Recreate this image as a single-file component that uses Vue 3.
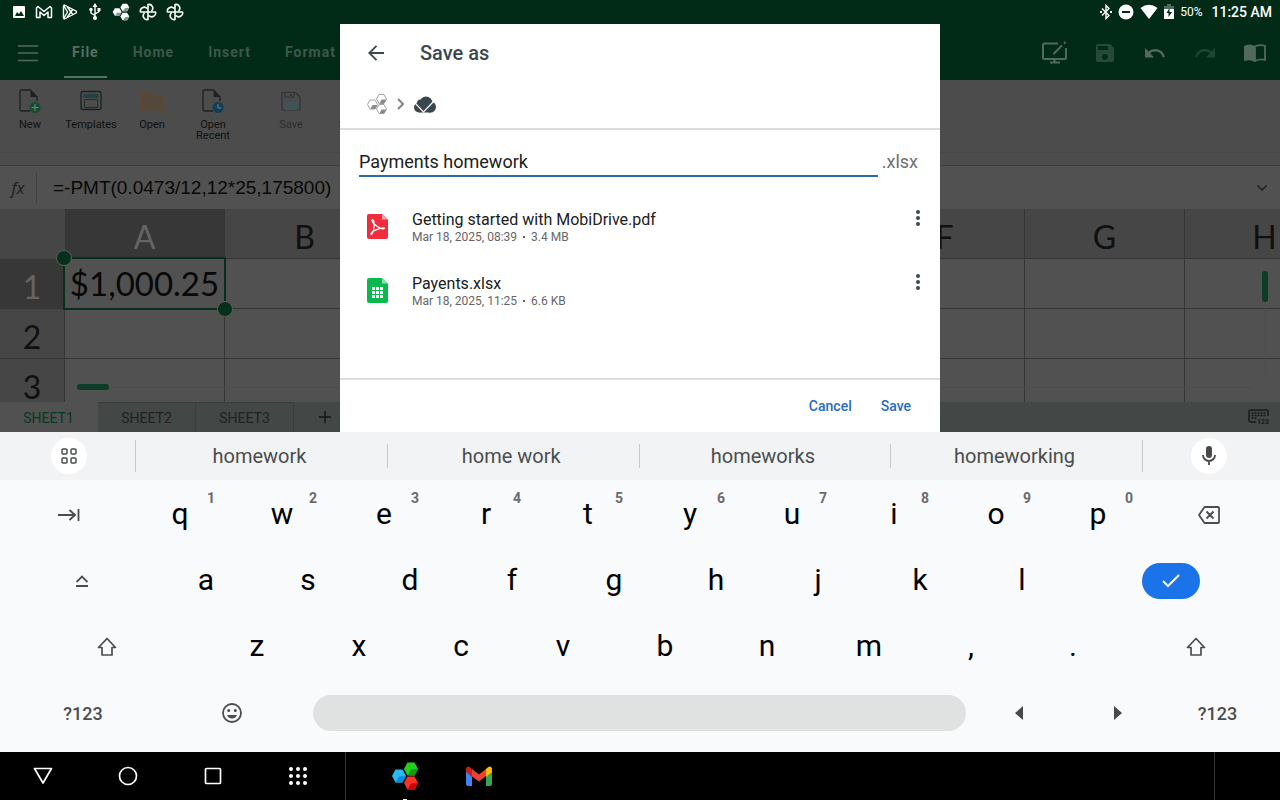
<script setup>
import { ref } from 'vue'

const fileName = ref('Payments homework')
const menus = ['File', 'Home', 'Insert', 'Format']
const columns = ['A', 'B', 'C', 'D', 'E', 'F', 'G', 'H']
const rows = [1, 2, 3]
const sheets = ['SHEET1', 'SHEET2', 'SHEET3']
const files = [
  { name: 'Getting started with MobiDrive.pdf', date: 'Mar 18, 2025, 08:39', size: '3.4 MB', type: 'pdf' },
  { name: 'Payents.xlsx', date: 'Mar 18, 2025, 11:25', size: '6.6 KB', type: 'xlsx' }
]
const suggestions = ['homework', 'home work', 'homeworks', 'homeworking']
const topRow = [...'qwertyuiop'].map((letter, i) => ({ letter, hint: (i + 1) % 10 }))
const homeRow = [...'asdfghjkl']
const bottomRow = [...'zxcvbnm,.']
</script>

<template>
  <div class="screen">
    <section class="app">
      <div class="status">
        <div class="status-left">
          <svg width="14" height="14" viewBox="0 0 14 14"><path fill="#fff" fill-rule="evenodd" d="M2 1h10a1 1 0 0 1 1 1v10a1 1 0 0 1-1 1H2a1 1 0 0 1-1-1V2a1 1 0 0 1 1-1zM3 11h9L9 6 7 9 5 7z" /></svg>
          <svg width="18" height="14" viewBox="0 0 18 14"><path fill="none" stroke="#fff" stroke-width="1.5" stroke-linejoin="round" d="M1.500 12.500V3L3 1.500 9 6.500 15 1.500 16.500 3v9.500H13V7L9 10.500 5 7v5.500z" /></svg>
          <svg width="16" height="16" viewBox="0 0 16 16"><path fill="none" stroke="#fff" stroke-width="1.400" stroke-linejoin="round" d="M2.500 1q-1 .3-1 1.500v11q0 1.200 1 1.500L14 9q1-1 0-2zM5 2.500L11 11M5 13.500L11 5M2 14l3.500-6L2 2" /></svg>
          <svg width="16" height="18" viewBox="0 0 16 18"><path fill="none" stroke="#fff" stroke-width="1.400" d="M8 3v12M8 12.500L4 10V7M8 11l4-2.500V6" /><path fill="#fff" d="M8 0l2.500 4h-5zM10.500 5h3v3h-3z" /><circle cx="4" cy="6.500" r="1.700" fill="#fff" /><circle cx="8" cy="15" r="2" fill="#fff" /></svg>
          <svg width="18" height="18" viewBox="0 0 26 28"><g fill="#fff"><path d="M0 14l3.500-6h7l3.500 6-3.500 6h-7zM12 7l3.500-6h7L26 7l-3.500 6h-7zM12 21l3.500-6h7l3.500 6-3.500 6h-7z" /></g><path fill="#82968b" d="M4 20l3-5h7l-3.500 5zM16 13l3-5 7-1-3.500 6zM16 27l3-5 7-1-3.500 6z" /></svg>
          <svg v-for="n in 2" :key="n" width="18" height="18" viewBox="0 0 18 18"><path fill="none" stroke="#fff" stroke-width="1.600" stroke-linejoin="round" d="M9 9V1.500a3.800 3.800 0 0 1 3.500 6.500 M9 1.500V9H1.500A3.800 3.800 0 0 1 8 5.500M9 9v7.500A3.800 3.800 0 0 1 5.500 10M9 9h7.500a3.800 3.800 0 0 1-6.500 3.500M9 9h7.500" /></svg>
        </div>
        <div class="status-right">
          <svg width="12" height="16" viewBox="0 0 12 16"><path fill="none" stroke="#fff" stroke-width="1.400" d="M2 4.500l7 7L6 14.500v-13l3 3-7 7" /><path fill="#fff" d="M0 7h2v2H0zM10 7h2v2h-2z" /></svg>
          <svg width="16" height="16" viewBox="0 0 16 16"><circle cx="8" cy="8" r="7.500" fill="#fff" /><path fill="#022b17" d="M4 7h8v2H4z" /></svg>
          <svg width="18" height="16" viewBox="0 0 18 16"><path fill="#fff" d="M9 15L.5 4Q9-2.500 17.500 4z" /></svg>
          <svg width="10" height="16" viewBox="0 0 10 16"><path fill="#4d6b5b" d="M3 0h4v2h3v6H0V2h3z" /><path fill="#fff" d="M0 5h10v10H0z" /><path fill="#022b17" d="M5.500 4v4H8l-3.500 5V9H2.500z" /></svg>
          <span class="battery">50%</span>
          <span class="clock">11:25 AM</span>
        </div>
      </div>

      <header class="menubar">
        <button class="menu-icon" aria-label="Menu"><svg width="20" height="18" viewBox="0 0 20 18"><path stroke="#53695d" stroke-width="1.500" d="M0 2h20M0 9h20M0 16.500h20" /></svg></button>
        <nav class="menus">
          <button v-for="(m, i) in menus" :key="m" :class="['menu', { active: i === 0 }]">{{ m }}</button>
        </nav>
        <div class="actions">
          <button aria-label="Edit mode"><svg width="26" height="24" viewBox="0 0 26 24" fill="none" stroke="#53695d" stroke-width="2"><path d="M16 2.500H2.500A1.500 1.500 0 0 0 1 4v12.500A1.500 1.500 0 0 0 2.500 18h20a1.500 1.500 0 0 0 1.500-1.500V7M12.500 18v4M8 21.500h10M11.500 13L20 4.500M22 2.500L23.500 1" /></svg></button>
          <button aria-label="Save document"><svg width="18" height="18" viewBox="0 0 18 18"><path fill="#274a37" fill-rule="evenodd" d="M2 0h12l4 4v12a2 2 0 0 1-2 2H2a2 2 0 0 1-2-2V2a2 2 0 0 1 2-2zM2 2v4h10V2zM9 10a3 3 0 1 0 0 6 3 3 0 0 0 0-6z" /></svg></button>
          <button aria-label="Undo"><svg width="20" height="10" viewBox="0 0 20 10"><path fill="#53695d" d="M0 0l3.600 3.600A10 10 0 0 1 20 8.700L17.800 9.400A7.800 7.800 0 0 0 5.200 5.200L9 9.500H0z" /></svg></button>
          <button aria-label="Redo"><svg width="20" height="10" viewBox="0 0 20 10"><path fill="#1e4731" d="M20 0l-3.600 3.600A10 10 0 0 0 0 8.700l2.200.7A7.800 7.800 0 0 1 14.800 5.200L11 9.500h9z" /></svg></button>
          <button aria-label="Reading view"><svg width="22" height="18" viewBox="0 0 22 18"><path fill="#53695d" d="M0 2q5-3 11 0v16q-5-3-11-1z" /><path fill="none" stroke="#53695d" stroke-width="1.800" d="M11 2.500q5-2.500 10-.5v14q-5-1.500-10 1z" /></svg></button>
        </div>
      </header>

      <div class="ribbon">
        <button class="tool"><svg width="22" height="24" viewBox="0 0 22 24"><path fill="none" stroke="#1c2023" stroke-width="1.300" d="M11.500 1H2.500A1.500 1.500 0 0 0 1 2.500v18A1.500 1.500 0 0 0 2.500 22H11M18 7.500V12" /><path fill="#1c2023" d="M11.500 0v8H19z" /><circle cx="16" cy="18.500" r="5.500" fill="#164c33" /><path stroke="#71897d" d="M16 15v7M12.500 18.500h7" /></svg><span>New</span></button>
        <button class="tool"><svg width="22" height="24" viewBox="0 0 22 24"><rect x="1" y="2.500" width="20" height="18" rx="1.500" fill="none" stroke="#1c2023" stroke-width="1.300" /><path fill="#243f4b" d="M3.500 5h15v4h-15z" /><path fill="none" stroke="#292c2e" d="M4.500 10.500h13v8h-13z" /></svg><span>Templates</span></button>
        <button class="tool"><svg width="22" height="24" viewBox="0 0 22 24"><path fill="#54483d" stroke="#6e4414" stroke-width="1.200" d="M1 19V5a1 1 0 0 1 1-1h7.500l2 2.500H20a1 1 0 0 1 1 1V19a1 1 0 0 1-1 1H2a1 1 0 0 1-1-1z" /></svg><span>Open</span></button>
        <button class="tool"><svg width="22" height="24" viewBox="0 0 22 24"><path fill="none" stroke="#1c2023" stroke-width="1.300" d="M11.500 1H2.500A1.500 1.500 0 0 0 1 2.500v18A1.500 1.500 0 0 0 2.500 22H11M18 7.500V12" /><path fill="#1c2023" d="M11.500 0v8H19z" /><circle cx="16" cy="18.500" r="5.500" fill="#123d54" /><path fill="none" stroke="#71828b" d="M16 15v4h3.500" /></svg><span>Open Recent</span></button>
        <button class="tool disabled"><svg width="22" height="24" viewBox="0 0 22 24"><path fill="none" stroke="#303235" stroke-width="1.200" d="M2 3.500h13.500L20 8v13H2zM5 3.500V8h9V3.500" /><path fill="#303235" d="M10 5h2v2h-2z" /><path fill="#3f5459" d="M5 13h12v8H5z" /></svg><span>Save</span></button>
        <button class="tool disabled"><svg width="22" height="24" viewBox="0 0 22 24"><path fill="none" stroke="#303235" d="M2 3.500h13.500L20 8v13H2z" /></svg><span>Save As</span></button>
      </div>
      <div class="ribbon-edge"></div>

      <div class="formula">
        <span class="fx">fx</span>
        <span class="expr">=-PMT(0.0473/12,12*25,175800)</span>
        <button class="expand" aria-label="Expand formula bar"><svg width="12" height="8" viewBox="0 0 12 8"><path fill="none" stroke="#1f1f1f" stroke-width="1.500" d="M1.500 1.500L6 6l4.500-4.500" /></svg></button>
      </div>

      <div class="sheet">
        <table>
          <thead>
            <tr><th class="corner"></th><th v-for="(c, i) in columns" :key="c" :class="{ current: i === 0 }">{{ c }}</th></tr>
          </thead>
          <tbody>
            <tr v-for="r in rows" :key="r">
              <th :class="{ current: r === 1 }">{{ r }}</th>
              <td v-for="(c, i) in columns" :key="c">
                <div v-if="r === 1 && i === 0" class="selection">$1,000.25<i class="handle start"></i><i class="handle end"></i></div>
              </td>
            </tr>
          </tbody>
        </table>
        <div class="scroll-x"><i></i></div>
        <div class="scroll-y"><i></i></div>
      </div>

      <footer class="tabs">
        <button v-for="(s, i) in sheets" :key="s" :class="['tab', { active: i === 0 }]">{{ s }}</button>
        <button class="add" aria-label="Add sheet"><svg width="12" height="12" viewBox="0 0 12 12"><path stroke="#171717" stroke-width="1.500" d="M6 0v12M0 6h12" /></svg></button>
        <button class="numpad" aria-label="Numeric keyboard"><svg width="22" height="18" viewBox="0 0 22 18"><path fill="none" stroke="#191b1a" stroke-width="1.500" d="M8 14H2.500A1.500 1.500 0 0 1 1 12.500v-9A1.500 1.500 0 0 1 2.500 2h16A1.500 1.500 0 0 1 20 3.500V8" /><path stroke="#191b1a" stroke-width="1.500" stroke-dasharray="2 1" d="M3.500 5h14M3.500 7.500h14M3.500 10h5" /><text x="9" y="16" font-family="Roboto" font-size="7" font-weight="700" fill="#191b1a">123</text></svg></button>
      </footer>

      <div class="dialog" role="dialog" aria-label="Save as">
        <div class="dialog-head">
          <button aria-label="Back"><svg width="16" height="16" viewBox="0 0 16 16"><path fill="none" stroke="#3b474e" stroke-width="1.800" d="M16 8H1.500M8.500 .8L1.300 8l7.200 7.200" /></svg></button>
          <h1>Save as</h1>
        </div>
        <div class="crumbs">
          <button aria-label="All files"><svg width="20" height="20" viewBox="0 0 20 20"><g fill="#fff" stroke="#a5a5a5"><path d="M.5 10.500L3 6h5l2.500 4.500L8 15H3zM9.500 5L12 .5h5L19.500 5 17 9.500h-5zM9.500 15l2.500-4.500h5l2.500 4.500-2.500 4.500h-5z" /></g><path fill="#8b8b8b" d="M3.500 15l2-4h5L8 15zM12.500 9.500l2-4h5L17 9.500zM12.500 19.500l2-4h5l-2.500 4z" /></svg></button>
          <svg width="7" height="12" viewBox="0 0 7 12"><path fill="none" stroke="#858585" stroke-width="2" d="M1 1l5 5-5 5" /></svg>
          <button aria-label="MobiDrive"><svg width="22" height="17" viewBox="0 0 22 17"><g fill="#3b474e"><circle cx="5" cy="11.500" r="5" /><circle cx="12" cy="7" r="6.500" /><circle cx="6.500" cy="7" r="3.500" /><circle cx="16.500" cy="11" r="5.500" /><path d="M5 9h12v7.500H5z" /></g><path fill="none" stroke="#fff" stroke-width="1.200" d="M1 7l8.500 9L19.500 5.500" /></svg></button>
        </div>
        <div class="name-row">
          <input id="file-name" v-model="fileName" type="text" aria-label="File name" />
          <label for="file-name">.xlsx</label>
        </div>
        <ul class="files">
          <li v-for="f in files" :key="f.name">
            <svg width="21" height="25" viewBox="0 0 21 25">
              <path :fill="f.type === 'pdf' ? '#f12c3c' : '#0ab94b'" d="M2 0h13l6 5.500V23a2 2 0 0 1-2 2H2a2 2 0 0 1-2-2V2a2 2 0 0 1 2-2z" />
              <path :fill="f.type === 'pdf' ? '#fba3aa' : '#8fe0ad'" d="M15 0l6 5.500h-6z" />
              <path v-if="f.type === 'pdf'" fill="none" stroke="#fff" stroke-width="1.300" stroke-linejoin="round" d="M4 20.500c-.8-1.500 2.500-3.500 4.500-4.300 3-1.200 7-2.500 8.800-2.200.5 1-2 1-4 .2C10 13 5.500 9 4.800 6.500c.5-1.500 2-.5 2.200 1.500.4 4-.6 12-3 12.500z" />
              <path v-else fill="#fff" d="M5 9h3v3H5zM9 9h3v3H9zM13 9h3v3h-3zM5 13h3v3H5zM9 13h3v3H9zM13 13h3v3h-3zM5 17h3v3H5zM9 17h3v3H9zM13 17h3v3h-3z" />
            </svg>
            <div class="file-text">
              <div class="file-name">{{ f.name }}</div>
              <div class="file-meta"><span>{{ f.date }}</span><i></i><span>{{ f.size }}</span></div>
            </div>
            <button :aria-label="'Options for ' + f.name"><svg width="4" height="16" viewBox="0 0 4 16"><g fill="#3b474e"><circle cx="2" cy="2" r="2" /><circle cx="2" cy="8" r="2" /><circle cx="2" cy="14" r="2" /></g></svg></button>
          </li>
        </ul>
        <div class="dialog-foot">
          <button>Cancel</button>
          <button>Save</button>
        </div>
      </div>
    </section>

    <section class="keyboard">
      <div class="suggest">
        <div class="suggest-end left"><button class="round" aria-label="Keyboard menu"><svg width="16" height="16" viewBox="0 0 16 16" fill="none" stroke="#4b4d4e" stroke-width="1.500"><rect x="1" y="1" width="5" height="5" rx="1" /><rect x="10" y="1" width="5" height="5" rx="1" /><rect x="1" y="10" width="5" height="5" rx="1" /><rect x="10" y="10" width="5" height="5" rx="1" /></svg></button></div>
        <button v-for="s in suggestions" :key="s" class="word">{{ s }}</button>
        <div class="suggest-end right"><button class="round" aria-label="Voice input"><svg width="14" height="20" viewBox="0 0 14 20"><rect x="4" y="0" width="6" height="12" rx="3" fill="#47494a" /><path fill="none" stroke="#47494a" stroke-width="1.800" d="M1 9a6 6 0 0 0 12 0M7 15v4" /></svg></button></div>
      </div>
      <div class="keys">
        <div class="row top">
          <button class="side-l" aria-label="Tab"><svg width="22" height="12" viewBox="0 0 22 12"><path fill="none" stroke="#4b4d4e" stroke-width="1.800" d="M0 6h17M11.500 1l5.500 5-5.500 5M20.500 0v12" /></svg></button>
          <button v-for="k in topRow" :key="k.letter" class="key">{{ k.letter }}<sup>{{ k.hint }}</sup></button>
          <button class="side-r" aria-label="Backspace"><svg width="22" height="18" viewBox="0 0 22 18"><path fill="none" stroke="#4b4d4e" stroke-width="1.800" stroke-linejoin="round" d="M6.500 1H20a1 1 0 0 1 1 1v14a1 1 0 0 1-1 1H6.500L1 9zM8.500 5.500l7 7M15.500 5.500l-7 7" /></svg></button>
        </div>
        <div class="row home">
          <button class="side-l" aria-label="Caps lock"><svg width="12" height="12" viewBox="0 0 12 12"><path fill="none" stroke="#4b4d4e" stroke-width="1.800" d="M.5 7L6 1.500 11.500 7M0 11h12" /></svg></button>
          <button v-for="k in homeRow" :key="k" class="key">{{ k }}</button>
          <div class="side-r"><button class="enter" aria-label="Done"><svg width="18" height="14" viewBox="0 0 18 14"><path fill="none" stroke="#fff" stroke-width="2" d="M1 7l5 5L17 1" /></svg></button></div>
        </div>
        <div class="row bottom">
          <button class="side-l" aria-label="Shift"><svg width="20" height="20" viewBox="0 0 20 20"><path fill="none" stroke="#4b4d4e" stroke-width="1.700" stroke-linejoin="round" d="M10 1.500L18.500 10.500h-3.500V18H5v-7.500H1.500z" /></svg></button>
          <button v-for="k in bottomRow" :key="k" class="key">{{ k }}</button>
          <button class="side-r" aria-label="Shift"><svg width="20" height="20" viewBox="0 0 20 20"><path fill="none" stroke="#4b4d4e" stroke-width="1.700" stroke-linejoin="round" d="M10 1.500L18.500 10.500h-3.500V18H5v-7.500H1.500z" /></svg></button>
        </div>
        <div class="row last">
          <button class="symbols">?123</button>
          <button class="emoji" aria-label="Emoji"><svg width="20" height="20" viewBox="0 0 20 20"><circle cx="10" cy="10" r="9" fill="none" stroke="#4b4d4e" stroke-width="1.800" /><circle cx="6.700" cy="7.500" r="1.500" fill="#4b4d4e" /><circle cx="13.300" cy="7.500" r="1.500" fill="#4b4d4e" /><path fill="#4b4d4e" d="M5 12h10q-1.500 3.500-5 3.500T5 12z" /></svg></button>
          <button class="space" aria-label="Space"></button>
          <button class="arrow" aria-label="Cursor left"><svg width="8" height="14" viewBox="0 0 8 14"><path fill="#47494a" d="M8 0v14L0 7z" /></svg></button>
          <button class="arrow" aria-label="Cursor right"><svg width="8" height="14" viewBox="0 0 8 14"><path fill="#47494a" d="M0 0v14l8-7z" /></svg></button>
          <button class="symbols right">?123</button>
        </div>
      </div>
    </section>

    <nav class="system">
      <div class="system-left">
        <button aria-label="Hide keyboard"><svg width="20" height="18" viewBox="0 0 20 18"><path fill="none" stroke="#fff" stroke-width="1.700" stroke-linejoin="round" d="M1.500 1.500h17L10 16z" /></svg></button>
        <button aria-label="Home screen"><svg width="20" height="20" viewBox="0 0 20 20"><circle cx="10" cy="10" r="8.500" fill="none" stroke="#fff" stroke-width="1.700" /></svg></button>
        <button aria-label="Recent apps"><svg width="18" height="18" viewBox="0 0 18 18"><rect x="1.500" y="1.500" width="15" height="15" rx="1" fill="none" stroke="#fff" stroke-width="1.700" /></svg></button>
        <button aria-label="All apps"><svg width="20" height="20" viewBox="0 0 20 20" fill="#fff"><template v-for="y in 3" :key="y"><circle v-for="x in 3" :key="x" :cx="x * 7 - 4" :cy="y * 7 - 4" r="2" /></template></svg></button>
      </div>
      <div class="system-apps">
        <button class="running" aria-label="OfficeSuite"><svg width="26" height="28" viewBox="0 0 26 28"><path fill="#2ab8f5" d="M0 14l3.500-6.500h7L14 14l-3.500 6.500h-7z" /><path fill="#0a8bd6" d="M3.500 20.500l3.500-6 7-.5-3.500 6.500z" /><path fill="#1fd01f" d="M12 7L15.500.5h7L26 7l-3.500 6.500h-7z" /><path fill="#139a0c" d="M15.500 13.500l3.500-6 7-.5-3.500 6.500z" /><path fill="#fb3028" d="M12 21l3.500-6.500h7L26 21l-3.500 6.500h-7z" /><path fill="#cb0505" d="M15.500 27.500l3.500-6 7-.5-3.500 6.500z" /></svg></button>
        <button aria-label="Gmail"><svg width="26" height="20" viewBox="0 0 26 20"><path fill="#4285f4" d="M0 4l6 4v12H2a2 2 0 0 1-2-2z" /><path fill="#34a853" d="M20 8l6-4v14a2 2 0 0 1-2 2h-4z" /><path fill="#fbbc04" d="M20 3l2-1.800C24-.5 26 .8 26 3v3l-6 5z" /><path fill="#ea4335" d="M6 3l7 5.500L20 3v7l-7 5.500L6 10.500z" /><path fill="#c5221f" d="M0 3C0 .8 2-.5 4 1.200L6 3v8L0 6z" /></svg></button>
      </div>
      <div class="system-end"></div>
    </nav>
  </div>
</template>

<style>
body { margin: 0; }
</style>

<style scoped>
* { box-sizing: border-box; }
.screen { display: flex; flex-direction: column; height: 100vh; font-family: Roboto, "Liberation Sans", sans-serif; overflow: hidden; }
button { display: flex; align-items: center; justify-content: center; margin: 0; padding: 0; border: 0; background: none; font: inherit; color: inherit; }
svg { display: block; flex: none; }

.app { position: relative; flex: 1; display: flex; flex-direction: column; min-height: 0; background: #515151; }
.status, .menubar, .ribbon, .ribbon-edge, .formula, .tabs { flex: none; }
.status { display: flex; justify-content: space-between; align-items: center; height: 24px; padding: 0 8px 0 12px; background: #022b17; color: #fff; }
.status-left { display: flex; align-items: center; gap: 9px; }
.status-right { display: flex; align-items: center; gap: 6px; }
.battery { font-size: 12px; }
.clock { margin-left: 3px; font-size: 14px; font-weight: 500; }

.menubar { display: flex; align-items: center; height: 56px; background: #022b17; padding: 2px 14px 0 0; }
.menu-icon { width: 56px; height: 54px; }
.menus { display: flex; align-self: stretch; gap: 18px; padding: 0 0 2px 8px; }
.menu { padding: 2px 8px 0; border-bottom: 2px solid transparent; font-size: 14px; font-weight: 700; letter-spacing: 1px; color: #3d5848; }
.menu.active { color: #5a6e62; border-bottom-color: #5a6e62; }
.actions { display: flex; margin-left: auto; gap: 28px; align-items: center; }
.actions button { width: 22px; }

.ribbon { display: flex; gap: 1px; height: 72px; background: #4c4c4c; padding-top: 9px; }
.tool { width: 60px; flex-direction: column; justify-content: flex-start; gap: 6px; font-size: 11px; line-height: 11px; color: #101010; padding: 0 6px; }
.tool.disabled { color: #2c2c2c; }
.tool:nth-child(5) { margin-left: 17px; }
.tool:nth-child(6) { margin-left: 6px; }
.ribbon-edge { height: 14px; background: #4c4c4c; border-top: 1px solid #474747; border-bottom: 1px solid #3e3e3e; }

.formula { display: flex; align-items: center; height: 43px; }
.fx { width: 37px; height: 32px; border-right: 1px solid #414141; font: italic 16px/32px "Noto Sans", sans-serif; text-align: center; color: #1f1f1f; }
.expr { margin-left: 16px; font: 19px/32px "Liberation Sans", Arial, sans-serif; color: #080808; }
.expand { margin-left: auto; width: 36px; height: 36px; }

.sheet { position: relative; flex: 1; min-height: 0; overflow: hidden; }
table { table-layout: fixed; width: 1345px; border-collapse: separate; border-spacing: 0; font-family: Lato, sans-serif; font-size: 32px; color: #101010; }
th, td { height: 50px; width: 160px; padding: 0; border-right: 1px solid #363636; border-bottom: 1px solid #363636; }
th { font-weight: 400; background: #464646; line-height: 40px; padding-top: 6px; }
tr > th:first-child { width: 65px; }
th.corner { border-color: #464646; }
th.current { background: #373737; color: #656565; }
td { position: relative; }
.selection { position: absolute; z-index: 1; inset: -2px -2px -2px -2px; border: 2px solid #062f1e; font-size: 33px; line-height: 48px; text-align: center; color: #080808; }
.handle { position: absolute; width: 16px; height: 16px; border-radius: 50%; background: #062f1e; border: 1px solid #576059; }
.handle.start { left: -9px; top: -9px; }
.handle.end { right: -9px; bottom: -9px; }
.scroll-x { position: absolute; left: 77px; right: 28px; bottom: 12px; height: 6px; background: linear-gradient(#4c4c4c, #4c4c4c) center / 100% 1px no-repeat; }
.scroll-y { position: absolute; right: 12px; top: 62px; bottom: 30px; width: 6px; background: linear-gradient(#4c4c4c, #4c4c4c) center / 1px 100% no-repeat; }
.scroll-x i, .scroll-y i { display: block; border-radius: 3px; background: #0d3d26; }
.scroll-x i { width: 32px; height: 6px; }
.scroll-y i { width: 6px; height: 31px; }

.tabs { display: flex; height: 30px; background: #434746; color: #202322; font-size: 14px; }
.tab { width: 98px; border-right: 1px solid #3a3d3c; border-top: 1px solid #3a3d3c; }
.tab.active { background: #515151; border-color: #515151; color: #083923; }
.add { width: 62px; }
.numpad { width: 42px; margin-left: auto; }

.dialog { position: absolute; top: 24px; bottom: 0; left: 50%; width: 600px; margin-left: -300px; display: flex; flex-direction: column; background: #fff; }
.dialog-head { display: flex; align-items: center; height: 56px; padding: 1px 0 0 28px; gap: 36px; }
.dialog-head button { width: 16px; height: 16px; }
h1 { margin: 0; font-size: 20px; line-height: 24px; font-weight: 500; color: #3b474e; }
.crumbs { display: flex; align-items: center; gap: 10px; height: 50px; padding-left: 27px; border-bottom: 2px solid #ddd; }
.name-row { display: flex; align-items: flex-end; gap: 4px; padding: 13px 22px 0 19px; }
input { flex: 1; min-width: 0; height: 34px; padding: 4px 0 0; border: 0; border-bottom: 2px solid #2c6ba4; border-radius: 0; outline: 0; background: none; font: 18px/24px Roboto, sans-serif; color: #202020; }
label { font-size: 18px; line-height: 24px; padding-bottom: 3px; color: #707070; }
.files { flex: 1; margin: 0; padding: 19px 0 0; list-style: none; }
.files li { display: flex; align-items: flex-start; height: 64px; padding: 18px 20px 0 27px; }
.file-text { flex: 1; margin: -4px 0 0 24px; }
.file-name { font-size: 16px; line-height: 20px; color: #202020; }
.file-meta { display: flex; align-items: center; gap: 6px; font-size: 12px; line-height: 14px; color: #666; }
.file-meta i { width: 2px; height: 2px; background: #666; }
.files button { width: 4px; height: 16px; margin-top: -4px; }
.dialog-foot { display: flex; justify-content: flex-end; gap: 29px; align-items: center; height: 54px; padding-right: 29px; border-top: 2px solid #ddd; color: #2b6cc0; font-size: 14px; font-weight: 500; }

.keyboard { flex: none; background: #f8fafc; }
.suggest { display: flex; align-items: center; height: 48px; background: #f1f3f4; }
.suggest-end { flex: 136 1 0; min-width: 0; display: flex; align-items: center; justify-content: center; height: 32px; }
.suggest-end.left { border-right: 1px solid #c7c9ca; padding-left: 2px; }
.suggest-end.right { padding-right: 4px; }
.word { flex: 252 1 0; min-width: 0; height: 24px; padding-right: 4px; border-right: 1px solid #c7c9ca; font-size: 20px; color: #4b4d4e; }
.word:nth-last-child(2) { height: 32px; }
.round { width: 36px; height: 36px; border-radius: 50%; background: #fff; }
.keys { padding: 2px 12px 6px 8px; }
.row { display: flex; height: 66px; align-items: stretch; }
.row > * { min-width: 0; }
.key { position: relative; flex: 102 1 0; font-size: 30px; color: #000; padding-bottom: 4px; }
.key sup { position: absolute; right: 16px; top: 8px; font-size: 14px; line-height: 16px; font-weight: 700; color: #6a6b6c; }
.side-r { display: flex; align-items: center; justify-content: center; }
.top .side-l { flex: 121 1 0; }
.top .side-r { flex: 119 1 0; }
.home .side-l { flex: 147 1 0; }
.home .side-r { flex: 195 1 0; }
.bottom .side-l { flex: 198 1 0; }
.bottom .side-r { flex: 144 1 0; }
.enter { width: 58px; height: 36px; border-radius: 18px; background: #1a73e8; }
.last { align-items: center; }
.last .symbols { flex: 150 1 0; font-size: 18px; font-weight: 500; color: #4b4d4e; }
.last .symbols.right { flex: 101 1 0; }
.last .emoji { flex: 148 1 0; }
.last .space { flex: 653 1 0; height: 36px; margin: 0 3px 0 7px; border-radius: 18px; background: #e0e2e1; }
.last .arrow { flex: 99 1 0; height: 36px; }

.system { flex: none; display: flex; height: 48px; background: #000; }
.system-left { display: flex; width: 346px; padding-right: 5px; border-right: 1px solid #333; }
.system-left button { flex: 1; }
.system-apps { flex: 1; display: flex; padding-left: 22px; }
.system-apps button { width: 74px; position: relative; }
.running::after { content: ""; position: absolute; left: 50%; bottom: 0; width: 4px; height: 1px; margin-left: -2px; background: #fff; }
.system-end { width: 66px; border-left: 1px solid #333; }
</style>
